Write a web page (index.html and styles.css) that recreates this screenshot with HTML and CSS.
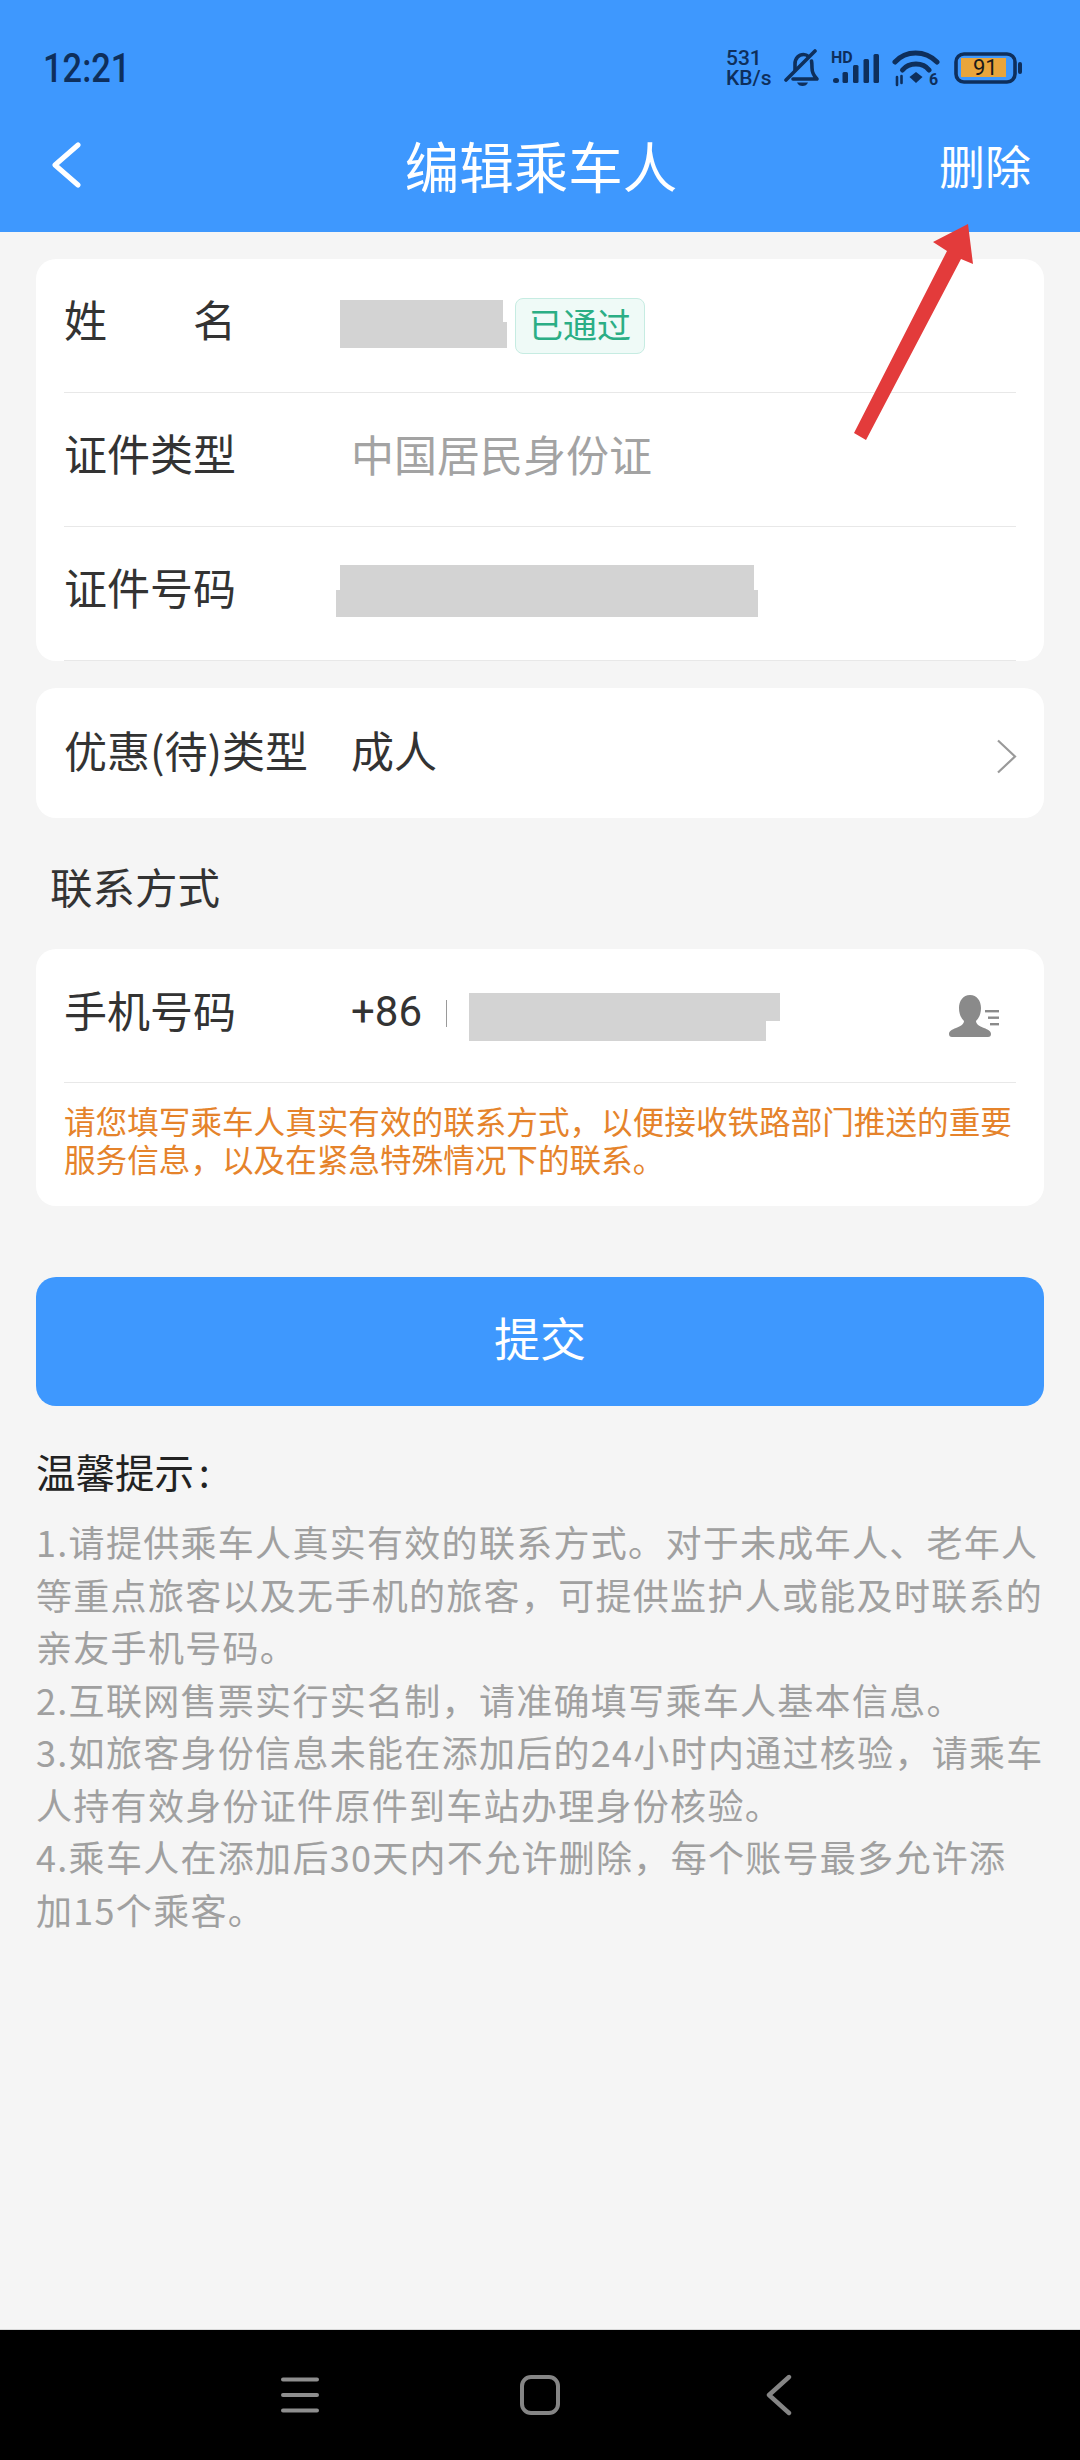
FILE: index.html
```html
<!DOCTYPE html>
<html lang="zh-CN">
<head>
    <meta charset="UTF-8">
    <meta name="viewport" content="width=device-width, initial-scale=1.0">
    <title>编辑乘车人</title>
    <link rel="stylesheet" href="styles.css">
</head>
<body>
    <header class="app-header">
        <div class="status-bar">
            <span class="status-time">12:21</span>
            <div class="status-icons">
                <div class="net-speed"><span>531</span><span>KB/s</span></div>
                <svg class="icon-bell" width="36" height="38" viewBox="0 0 36 38" fill="none" stroke="#0e2f5c" stroke-width="3.6" stroke-linecap="round" stroke-linejoin="round">
                    <path d="M11 21V15C11 9 15 5.5 19.5 5.5C21.5 5.5 23 6 24.5 7.5"/>
                    <path d="M27.5 12C28 14 28 16 28 19C28 24 30 27 33 30H9"/>
                    <path d="M2 31L31 2"/>
                    <path d="M13 33.5H24C23 36 21 37 18.5 37C16 37 14 36 13 33.5Z" fill="#0e2f5c" stroke="none"/>
                </svg>
                <svg class="icon-signal" width="48" height="40" viewBox="0 -8 48 40" fill="#0e2f5c">
                    <text class="svg-label" x="0" y="11" font-size="16">HD</text>
                    <rect x="2" y="26" width="6" height="5" rx="2.5"/>
                    <rect x="11.500" y="20" width="5.500" height="11" rx="1.500"/>
                    <rect x="22" y="13" width="5.500" height="18" rx="1.500"/>
                    <rect x="32.500" y="7" width="5.500" height="24" rx="1.500"/>
                    <rect x="42.500" y="2" width="5.500" height="29" rx="1.500"/>
                </svg>
                <svg class="icon-wifi" width="48" height="46" viewBox="0 0 48 46" fill="none" stroke="#0e2f5c" stroke-width="5" stroke-linecap="round">
                    <path d="M3 13C14 1 33 1 45 13"/>
                    <path d="M10.500 21C17 13 31 13 37 21"/>
                    <path d="M17.500 28L24 23L30.500 28L24 34Z" fill="#0e2f5c" stroke="none"/>
                    <path d="M5 28V36M9.500 27V34" stroke-width="2.600"/>
                    <text class="svg-label" x="37" y="36" font-size="16" fill="#0e2f5c" stroke="none">6</text>
                </svg>
                <svg class="icon-battery" width="69" height="32" viewBox="0 0 69 32" fill="none">
                    <rect x="2" y="2" width="59" height="28" rx="8" stroke="#0e2f5c" stroke-width="3.600"/>
                    <rect x="7" y="6" width="45" height="19" fill="#e9a53b"/>
                    <rect x="64" y="10" width="4" height="12" rx="2" fill="#0e2f5c"/>
                    <text class="svg-number" x="19" y="23" font-size="22" fill="#1a1a1a">91</text>
                </svg>
            </div>
        </div>
        <div class="nav-bar">
            <svg class="icon-back" width="30" height="46" viewBox="0 0 30 46" fill="none" stroke="#fff" stroke-width="5" stroke-linecap="round" stroke-linejoin="round">
                <path d="M27 3L4 23L27 43"/>
            </svg>
            <h1 class="nav-title">编辑乘车人</h1>
            <span class="nav-action">删除</span>
        </div>
    </header>

    <main class="content">
        <section class="card card-identity">
            <div class="row row-tall">
                <div class="row-label label-spread"><span>姓</span><span>名</span></div>
                <div class="redact redact-name"><i></i><i></i></div>
                <span class="badge">已通过</span>
            </div>
            <div class="row row-tall">
                <div class="row-label">证件类型</div>
                <div class="row-value muted">中国居民身份证</div>
            </div>
            <div class="row row-tall row-last">
                <div class="row-label">证件号码</div>
                <div class="redact redact-id"><i></i><i></i></div>
            </div>
        </section>

        <section class="card card-discount">
            <div class="row row-plain">
                <div class="row-label">优惠(待)类型</div>
                <div class="row-value">成人</div>
                <svg class="icon-chevron" width="21" height="35" viewBox="0 0 21 35" fill="none" stroke="#9a9a9a" stroke-width="2.200">
                    <path d="M2 1.500L19 17.500L2 33.500"/>
                </svg>
            </div>
        </section>

        <h2 class="section-title">联系方式</h2>

        <section class="card card-contact">
            <div class="row row-phone">
                <div class="row-label">手机号码</div>
                <span class="phone-code">+86</span>
                <span class="phone-sep"></span>
                <div class="redact redact-phone"><i></i><i></i></div>
                <svg class="icon-contact" width="50" height="42" viewBox="0 0 50 42" fill="#8a8a8a">
                    <path d="M21 0C14 0 10 6 10 13C10 19 12 23 15 26C15 29 12 31 7 33C3 34.500 0 36 0 39C0 41 1 42 3 42H39C41 42 42 41 42 39C42 36 39 34.500 35 33C30 31 27 29 27 26C30 23 32 19 32 13C32 6 28 0 21 0Z"/>
                    <rect x="36" y="15" width="14" height="2.400"/>
                    <rect x="39" y="21.500" width="11" height="2.400"/>
                    <rect x="41" y="28" width="9" height="2.400"/>
                </svg>
            </div>
            <p class="contact-note">请您填写乘车人真实有效的联系方式，以便接收铁路部门推送的重要服务信息，以及在紧急特殊情况下的联系。</p>
        </section>

        <button class="submit-btn">提交</button>

        <section class="tips">
            <h3 class="tips-title">温馨提示 :</h3>
            <p>1.请提供乘车人真实有效的联系方式。对于未成年人、老年人等重点旅客以及无手机的旅客，可提供监护人或能及时联系的亲友手机号码。</p>
            <p>2.互联网售票实行实名制，请准确填写乘车人基本信息。</p>
            <p>3.如旅客身份信息未能在添加后的24小时内通过核验，请乘车人持有效身份证件原件到车站办理身份核验。</p>
            <p>4.乘车人在添加后30天内不允许删除，每个账号最多允许添<br>加15个乘客。</p>
        </section>
    </main>

    <nav class="system-nav">
        <svg class="nav-menu" width="38" height="36" viewBox="0 0 38 36" fill="none" stroke="#8e8e8e" stroke-width="4" stroke-linecap="round">
            <path d="M2 2.500H36M2 18H36M2 33.500H36"/>
        </svg>
        <svg class="nav-home" width="40" height="40" viewBox="0 0 40 40" fill="none" stroke="#858585" stroke-width="4">
            <rect x="2" y="2" width="36" height="36" rx="9"/>
        </svg>
        <svg class="nav-return" width="26" height="42" viewBox="0 0 26 42" fill="none" stroke="#858585" stroke-width="4.400" stroke-linecap="round" stroke-linejoin="round">
            <path d="M23 3L3 21L23 39"/>
        </svg>
    </nav>

    <svg class="annotation-arrow" width="130" height="225" viewBox="850 220 130 225">
        <polygon points="854,433 866,440 961,259 973,264 968,224 933,242 947,251" fill="#e33b3b"/>
    </svg>
</body>
</html>
```

FILE: styles.css
```css
* {
    margin: 0;
    padding: 0;
    box-sizing: border-box;
}
body {
    position: relative;
    width: 1080px;
    height: 2460px;
    overflow: hidden;
    display: flex;
    flex-direction: column;
    background: #f5f5f5;
    color: #333;
    font-family: "Noto Sans CJK SC", "Noto Sans", sans-serif;
}

/* header */
.app-header {
    height: 232px;
    flex-shrink: 0;
    background: #3e98fe;
}
.status-bar {
    height: 98px;
    padding: 0 57px 0 43px;
    display: flex;
    align-items: center;
    justify-content: space-between;
    color: #0e2f5c;
}
.status-time {
    font-family: Roboto, sans-serif;
    font-weight: 500;
    font-size: 41px;
    width: 84px;
    white-space: nowrap;
    margin-top: 37px;
    transform: scaleX(0.84);
    transform-origin: left center;
}
.status-icons {
    display: flex;
    align-items: center;
    margin-top: 38px;
}
.net-speed {
    width: 58px;
    display: flex;
    flex-direction: column;
    font-family: Roboto, sans-serif;
    font-weight: 500;
    font-size: 21px;
    line-height: 20px;
}
.icon-signal {
    margin-left: 11px;
    margin-top: -8px;
}
.icon-wifi {
    margin-left: 13px;
    margin-top: 8px;
}
.icon-battery {
    margin-left: 14px;
}
.svg-label {
    font-family: Roboto, sans-serif;
    font-weight: 700;
}
.svg-number {
    font-family: Roboto, sans-serif;
}
.nav-bar {
    height: 134px;
    padding: 0 49px 0 51px;
    display: grid;
    grid-template-columns: 1fr auto 1fr;
    align-items: center;
    color: #fff;
}
.nav-title {
    font-size: 54.500px;
    font-weight: 400;
    line-height: 1.2;
}
.nav-action {
    font-size: 46px;
    line-height: 1.2;
    justify-self: end;
}

/* cards */
.content {
    flex: 1;
    padding: 27px 36px 0;
}
.card {
    background: #fff;
    border-radius: 20px;
}
.card-identity {
    height: 402px;
}
.card-discount {
    height: 130px;
    margin-top: 27px;
}
.card-contact {
    height: 257px;
}
.row {
    margin: 0 28px;
    display: flex;
    align-items: center;
    border-bottom: 1px solid #e8e8e8;
}
.row-tall {
    height: 134px;
    padding-bottom: 6px;
}
.row-last {
    height: 134px;
}
.row-plain {
    height: 130px;
    border-bottom: none;
}
.row-phone {
    height: 134px;
    padding-bottom: 4px;
}
.row-label {
    width: 287px;
    flex-shrink: 0;
    padding-bottom: 7px;
    font-size: 43px;
    line-height: 1.2;
    white-space: nowrap;
}
.label-spread {
    display: flex;
    justify-content: space-between;
    width: 172px;
    margin-right: 104px;
}
.row-value {
    padding-bottom: 6px;
    font-size: 43px;
    line-height: 1.2;
}
.muted {
    color: #a3a3a3;
}
.icon-chevron {
    margin-left: auto;
    margin-right: -1px;
    margin-top: 6px;
}

/* grey blocks over private data */
.redact i {
    display: block;
    background: #d3d3d3;
}
.redact-name {
    margin-top: 3px;
}
.redact-name i:first-child {
    width: 163px;
    height: 22px;
}
.redact-name i:last-child {
    width: 167px;
    height: 26px;
}
.redact-id {
    margin-left: -15px;
}
.redact-id i:first-child {
    width: 414px;
    height: 25px;
    margin-left: 4px;
}
.redact-id i:last-child {
    width: 422px;
    height: 27px;
}
.redact-phone {
    margin-left: 22px;
    margin-top: 6px;
}
.redact-phone i:first-child {
    width: 311px;
    height: 28px;
}
.redact-phone i:last-child {
    width: 297px;
    height: 20px;
}
.badge {
    margin: 7px 0 0 8px;
    width: 130px;
    height: 56px;
    padding-bottom: 6px;
    display: flex;
    align-items: center;
    justify-content: center;
    font-size: 34px;
    color: #2bae85;
    background: #effaf7;
    border: 1px solid #c6ece2;
    border-radius: 8px;
}
.section-title {
    height: 131px;
    padding: 42px 0 0 14px;
    font-size: 42.500px;
    font-weight: 400;
    line-height: 52px;
}
.phone-code {
    font-family: Roboto, sans-serif;
    font-size: 42px;
    line-height: 1;
    margin-top: -4px;
    width: 70px;
}
.phone-sep {
    width: 1px;
    height: 27px;
    margin-left: 25px;
    background: #9a9a9a;
}
.icon-contact {
    margin-left: auto;
    margin-right: 17px;
    margin-top: 4px;
}
.contact-note {
    margin: 18px 28px 0;
    font-family: "Noto Sans CJK TC", "Noto Sans CJK SC", sans-serif;
    font-size: 31.600px;
    line-height: 38px;
    color: #e5832b;
}

/* submit */
.submit-btn {
    display: block;
    width: 100%;
    height: 129px;
    margin-top: 71px;
    padding-bottom: 12px;
    border: none;
    border-radius: 20px;
    background: #3e98fe;
    color: #fff;
    font-family: inherit;
    font-size: 46px;
}

/* tips */
.tips {
    margin-top: 41px;
}
.tips-title {
    font-size: 39.500px;
    font-weight: 400;
    line-height: 48px;
    word-spacing: -4px;
    color: #222;
    margin-bottom: 20px;
}
.tips p {
    font-family: "Noto Sans CJK TC", "Noto Sans CJK SC", sans-serif;
    font-size: 36px;
    letter-spacing: 1.300px;
    line-height: 52.500px;
    color: #a0a0a0;
}

/* bottom bar */
.system-nav {
    height: 131px;
    flex-shrink: 0;
    display: flex;
    align-items: center;
    padding-left: 281px;
    background: #000;
    border-top: 1px solid #d8d8d8;
}
.nav-home {
    margin-left: 201px;
}
.nav-return {
    margin-left: 206px;
}

.annotation-arrow {
    position: absolute;
    left: 850px;
    top: 220px;
}
```
